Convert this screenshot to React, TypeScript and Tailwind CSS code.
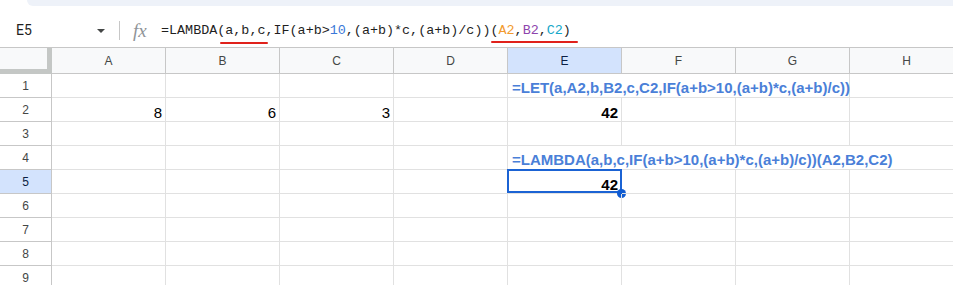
import { Fragment } from "react";

const COLS = ["A", "B", "C", "D", "E", "F", "G", "H"];
const ROWS = [1, 2, 3, 4, 5, 6, 7, 8, 9];

type CellDef = { text: string; bold?: boolean; blue?: boolean; span?: number; left?: boolean; selected?: boolean };

const DATA: Record<number, Record<string, CellDef>> = {
  1: { E: { text: "=LET(a,A2,b,B2,c,C2,IF(a+b>10,(a+b)*c,(a+b)/c))", bold: true, blue: true, span: 3, left: true } },
  2: { A: { text: "8" }, B: { text: "6" }, C: { text: "3" }, E: { text: "42", bold: true } },
  4: { E: { text: "=LAMBDA(a,b,c,IF(a+b>10,(a+b)*c,(a+b)/c))(A2,B2,C2)", bold: true, blue: true, span: 4, left: true } },
  5: { E: { text: "42", bold: true, selected: true } },
};

function FormulaBar() {
  return (
    <div className="h-[42px] flex items-center pt-[8px] border-b border-[#c7c7c7] bg-white">
      <div className="w-[119px] flex items-center pl-[16px] pr-[14px] justify-between">
        <span className="text-[14px] text-[#1f1f1f] font-['Roboto']">E5</span>
        <span className="w-0 h-0 border-l-[4px] border-r-[4px] border-t-[4px] border-l-transparent border-r-transparent border-t-[#444746]" />
      </div>
      <div className="w-px h-[19px] bg-[#c7c7c7]" />
      <span className="ml-[13px] w-[18px] text-[19px] leading-none italic text-[#8f9498] font-['Liberation_Serif']">fx</span>
      <div className="relative ml-[10px] text-[13.4px] text-[#1f1f1f] font-['Liberation_Mono'] whitespace-pre leading-[18px]">
        =LAMBDA(a,b,c,IF(a+b&gt;<span className="text-[#3b78d8]">10</span>,(a+b)*c,(a+b)/c))(
        <span className="text-[#f29a2e]">A2</span>,<span className="text-[#8e44ad]">B2</span>,
        <span className="text-[#16a8c9]">C2</span>)
        <span className="absolute left-[59px] top-[20px] w-[48px] h-[2.5px] rounded-full bg-[#e0211b]" />
        <span className="absolute left-[330px] top-[19px] w-[87px] h-[2.5px] rounded-full bg-[#e0211b]" />
      </div>
    </div>
  );
}

export default function App() {
  return (
    <div className="w-[953px] h-[285px] overflow-hidden bg-white font-['Liberation_Sans']">
      <div className="h-[6px] bg-white">
        <div className="ml-[27px] h-full bg-[#eef2f9] rounded-bl-[14px]" />
      </div>
      <FormulaBar />

      <div className="grid grid-cols-[52px_repeat(8,114px)] grid-rows-[26px] auto-rows-[24px]">
        <div className="bg-[#f8f9fa] border-r-[5px] border-b-[5px] border-[#c4c7c5]" />
        {COLS.map((c) => (
          <div key={c}
            className={`flex items-center justify-center text-[12px] border-r border-b border-[#c7c7c7] ${
              c === "E" ? "bg-[#d3e3fd] text-[#0b1f44]" : "bg-[#f8f9fa] text-[#444746]"}`}>
            {c}
          </div>
        ))}

        {ROWS.map((r) => {
          const row = DATA[r] ?? {};
          const cells: JSX.Element[] = [];
          let skip = 0;
          COLS.forEach((c) => {
            if (skip > 0) { skip--; return; }
            const d = row[c];
            const span = d?.span ?? 1;
            skip = span - 1;
            cells.push(
              <div key={c}
                className={`relative flex items-end leading-[17px] text-[15px] whitespace-nowrap border-r border-b border-[#e1e1e1]
                  ${span === 3 ? "col-span-3" : span === 4 ? "col-span-4" : ""}
                  ${d?.left ? "justify-start pl-[4px] pb-[1px]" : "justify-end pr-[3px]"}
                  ${d?.bold ? "font-bold" : ""} ${d?.blue ? "text-[#4a7fd8]" : "text-black"}`}>
                {d?.text}
                {d?.selected && (
                  <>
                    <span className="absolute left-[-1px] top-[-1px] right-[-1px] bottom-0 border-2 border-[#1b63d4]" />
                    <span className="absolute right-[-5px] bottom-[-5px] w-[9px] h-[9px] rounded-full bg-[#0f5bd1]" />
                  </>
                )}
              </div>
            );
          });
          return (
            <Fragment key={r}>
              <div className={`flex items-center justify-center text-[12px] border-r border-b border-[#c7c7c7] ${
                r === 5 ? "bg-[#d3e3fd] text-[#0b1f44]" : "bg-white text-[#444746]"}`}>
                {r}
              </div>
              {cells}
            </Fragment>
          );
        })}
      </div>
    </div>
  );
}
